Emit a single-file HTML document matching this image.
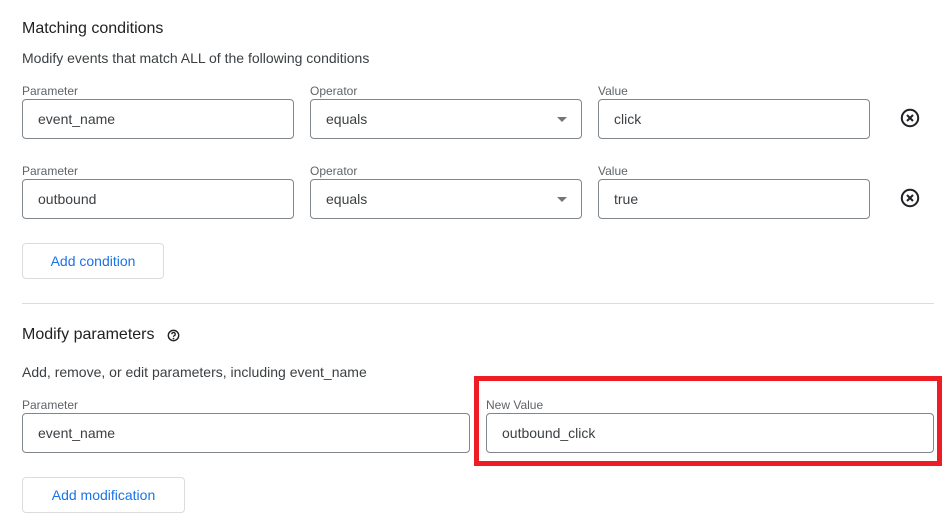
<!DOCTYPE html>
<html><head><style>
body{margin:0;width:952px;height:526px;background:#fff;font-family:"Liberation Sans",Arial,sans-serif;position:relative;overflow:hidden;color:#202124}
.a{position:absolute}
.t{font-size:16px;color:#202124}
.s{font-size:14px;color:#3c4043}
.l{font-size:12px;color:#5f6368}
.in{position:absolute;box-sizing:border-box;border:1px solid #80868b;border-radius:4px;height:40px;font-size:14px;color:#3c4043;padding-left:15px;line-height:38px}
.btn{position:absolute;box-sizing:border-box;border:1px solid #dadce0;border-radius:4px;color:#1a73e8;font-size:14px;text-align:center;line-height:34px;height:36px}
.arr{position:absolute;right:14px;top:17px;width:0;height:0;border-left:5px solid transparent;border-right:5px solid transparent;border-top:5px solid #757575}
</style></head><body>
<div class="a t" style="left:22px;top:20px">Matching conditions</div>
<div class="a s" style="left:22px;top:50px">Modify events that match ALL of the following conditions</div>

<div class="a l" style="left:22px;top:84px">Parameter</div>
<div class="a l" style="left:310px;top:84px">Operator</div>
<div class="a l" style="left:598px;top:84px">Value</div>
<div class="in" style="left:22px;top:99px;width:272px">event_name</div>
<div class="in" style="left:310px;top:99px;width:272px">equals<div class="arr"></div></div>
<div class="in" style="left:598px;top:99px;width:272px">click</div>
<svg class="a" style="left:900px;top:108px" width="20" height="20" viewBox="0 0 20 20"><circle cx="10" cy="10" r="8.2" fill="none" stroke="#202124" stroke-width="2"/><path d="M7 7L13 13M13 7L7 13" stroke="#202124" stroke-width="2"/></svg>

<div class="a l" style="left:22px;top:164px">Parameter</div>
<div class="a l" style="left:310px;top:164px">Operator</div>
<div class="a l" style="left:598px;top:164px">Value</div>
<div class="in" style="left:22px;top:179px;width:272px">outbound</div>
<div class="in" style="left:310px;top:179px;width:272px">equals<div class="arr"></div></div>
<div class="in" style="left:598px;top:179px;width:272px">true</div>
<svg class="a" style="left:900px;top:188px" width="20" height="20" viewBox="0 0 20 20"><circle cx="10" cy="10" r="8.2" fill="none" stroke="#202124" stroke-width="2"/><path d="M7 7L13 13M13 7L7 13" stroke="#202124" stroke-width="2"/></svg>

<div class="btn" style="left:22px;top:243px;width:142px">Add condition</div>
<div class="a" style="left:22px;top:303px;width:912px;height:1px;background:#dadce0"></div>

<div class="a t" style="left:22px;top:326px">Modify parameters</div>
<svg class="a" style="left:167px;top:329px" width="13" height="13" viewBox="0 0 13 13"><circle cx="6.5" cy="6.5" r="5.2" fill="none" stroke="#202124" stroke-width="1.4"/><path d="M4.8 5.2a1.7 1.7 0 1 1 2.4 1.5c-.5.3-.7.6-.7 1.2" fill="none" stroke="#202124" stroke-width="1.3"/><circle cx="6.5" cy="9.6" r=".8" fill="#202124"/></svg>
<div class="a s" style="left:22px;top:364px">Add, remove, or edit parameters, including event_name</div>

<div class="a l" style="left:22px;top:398px">Parameter</div>
<div class="a l" style="left:486px;top:398px">New Value</div>
<div class="in" style="left:22px;top:413px;width:448px">event_name</div>
<div class="in" style="left:486px;top:413px;width:448px">outbound_click</div>
<div class="a" style="left:474px;top:376px;width:468px;height:90px;box-sizing:border-box;border:5px solid #ee1c25"></div>

<div class="btn" style="left:22px;top:477px;width:163px">Add modification</div>
</body></html>
